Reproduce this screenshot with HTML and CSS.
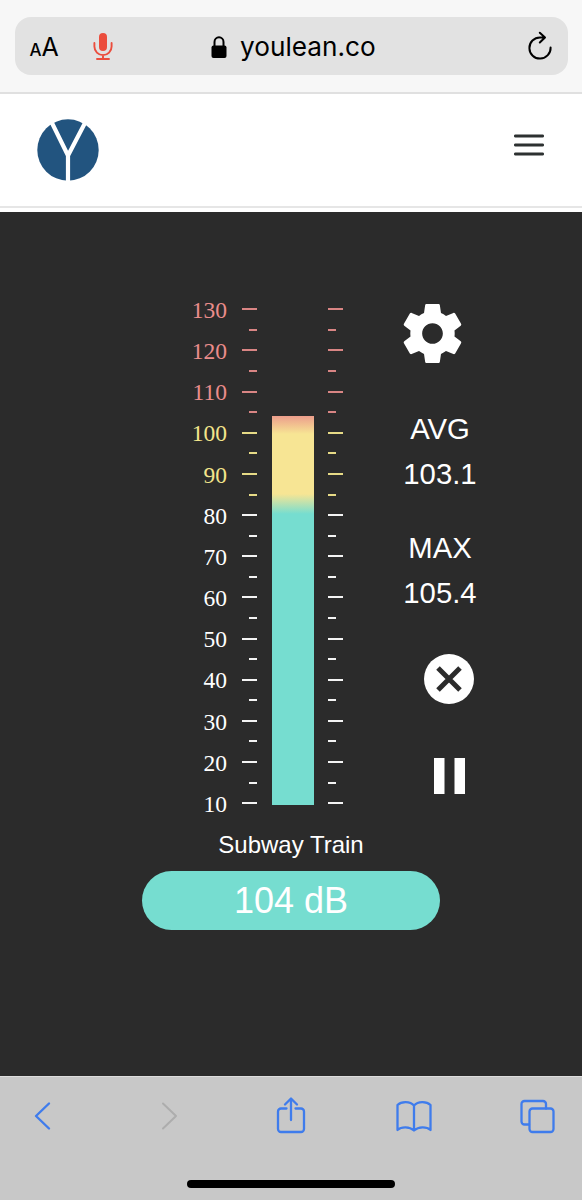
FILE: index.html
```html
<!DOCTYPE html>
<html lang="en">
<head>
  <meta charset="UTF-8">
  <meta name="viewport" content="width=device-width,initial-scale=1.0">
  <title>Youlean Online Loudness Meter</title>
  <link rel="stylesheet" href="styles.css">
</head>
<body>
  <header class="browser-bar">
    <div class="address">
      <span class="text-size"><small>A</small>A</span>
      <svg class="mic" width="20" height="30" viewBox="0 0 20 30">
        <rect x="6" y="1" width="8" height="18" rx="4" fill="#eb4d3d"/>
        <path d="M1.400 11v3.500a8.600 8.600 0 0 0 17.200 0V11M10 23v4M4 27h12" fill="none" stroke="#eb4d3d" stroke-width="1.900" stroke-linecap="round"/>
      </svg>
      <div class="site">
        <svg width="16" height="23" viewBox="0 0 16 23">
          <rect x="0.500" y="9.500" width="15" height="12.500" rx="2"/>
          <path d="M3.500 11V6a4.500 4.700 0 0 1 9 0v5" fill="none" stroke="#000" stroke-width="2"/>
        </svg>
        <span>youlean.co</span>
      </div>
      <svg class="reload" width="26" height="30" viewBox="0 0 26 30" fill="none" stroke="#000" stroke-width="2" stroke-linecap="round" stroke-linejoin="round">
        <path d="M23.600 16.500A10.600 10.600 0 1 1 13 6.400h4.500M12.800 1.700l5.200 4.800-5.200 5"/>
      </svg>
    </div>
  </header>

  <nav class="site-nav">
    <svg class="logo" width="62" height="62" viewBox="0 0 62 62">
      <circle cx="31" cy="31" r="30.700" fill="#22547f"/>
      <path d="M14.500 3L31 36.500 48.500 3M31 35v27" fill="none" stroke="#fff" stroke-width="4.200"/>
    </svg>
    <svg class="menu" width="30" height="22" viewBox="0 0 30 22" stroke="#2d3131" stroke-width="2.900" stroke-linecap="round">
      <path d="M1.400 2h27.200M1.400 11h27.200M1.400 20h27.200"/>
    </svg>
  </nav>

  <main class="app">
    <div class="meter">
      <ol class="labels">
        <li>130</li><li>120</li><li>110</li><li>100</li><li>90</li><li>80</li><li>70</li>
        <li>60</li><li>50</li><li>40</li><li>30</li><li>20</li><li>10</li>
      </ol>
      <div class="ticks ticks-left">
        <i></i><i></i><i></i><i></i><i></i><i></i><i></i><i></i><i></i><i></i><i></i><i></i><i></i>
        <i></i><i></i><i></i><i></i><i></i><i></i><i></i><i></i><i></i><i></i><i></i><i></i>
      </div>
      <div class="bar"></div>
      <div class="ticks">
        <i></i><i></i><i></i><i></i><i></i><i></i><i></i><i></i><i></i><i></i><i></i><i></i><i></i>
        <i></i><i></i><i></i><i></i><i></i><i></i><i></i><i></i><i></i><i></i><i></i><i></i>
      </div>
      <aside class="side">
        <svg class="gear" width="71" height="71" viewBox="0 0 24 24" fill="#fff">
          <path d="M19.430 12.980c.04-.32.07-.64.07-.98s-.03-.66-.07-.98l2.110-1.650c.19-.15.24-.42.12-.64l-2-3.460c-.12-.22-.39-.3-.61-.22l-2.490 1c-.52-.4-1.080-.73-1.690-.98l-.38-2.650C14.460 2.180 14.250 2 14 2h-4c-.25 0-.46.18-.49.42l-.38 2.650c-.61.25-1.170.59-1.690.98l-2.490-1c-.23-.09-.49 0-.61.22l-2 3.460c-.13.22-.07.49.12.64l2.110 1.650c-.04.32-.07.65-.07.98s.03.66.07.98l-2.110 1.650c-.19.15-.24.42-.12.64l2 3.460c.12.22.39.3.61.22l2.490-1c.52.4 1.080.73 1.690.98l.38 2.650c.03.24.24.42.49.42h4c.25 0 .46-.18.49-.42l.38-2.650c.61-.25 1.170-.59 1.690-.98l2.490 1c.23.09.49 0 .61-.22l2-3.460c.12-.22.07-.49-.12-.64l-2.110-1.650zM12 15.500c-1.930 0-3.500-1.570-3.500-3.500s1.570-3.500 3.500-3.500 3.500 1.570 3.500 3.500-1.570 3.500-3.500 3.500z"/>
        </svg>
        <p class="stat">AVG<br>103.1</p>
        <p class="stat">MAX<br>105.4</p>
        <svg class="reset" width="50" height="50" viewBox="0 0 50 50">
          <circle cx="25" cy="25" r="25" fill="#fff"/>
          <path d="M14 14l22 22M36 14l-22 22" stroke="#2b2b2b" stroke-width="5"/>
        </svg>
        <svg class="pause" width="31" height="36" viewBox="0 0 31 36" fill="#fff">
          <path d="M0 0h10.500v36H0zM20.500 0H31v36H20.500z"/>
        </svg>
      </aside>
    </div>
    <p class="source">Subway Train</p>
    <div class="level">104 dB</div>
  </main>

  <footer class="toolbar">
    <div class="actions">
      <svg viewBox="0 0 40 40"><path d="M24 7.500L11 20 24 32.500" stroke-width="2.400"/></svg>
      <svg class="off" viewBox="0 0 40 40"><path d="M15 7.500L28 20 15 32.500" stroke-width="2"/></svg>
      <svg viewBox="0 0 40 40">
        <path d="M15.500 12.500H10a3 3 0 0 0-3 3V33a3 3 0 0 0 3 3h20a3 3 0 0 0 3-3V15.500a3 3 0 0 0-3-3h-5.500M20 24V3M14 8.500L20 2.500l6 6"/>
      </svg>
      <svg viewBox="0 0 40 40">
        <path d="M20 9.500C16 5 7.500 5 3.500 9v25c4-3.500 12-3.500 16.500.5 4.500-4 12.500-4 16.500-.5V9c-4-4-12.500-4-16.500.5v25"/>
      </svg>
      <svg viewBox="0 0 40 40">
        <path d="M12 28.500H7.500a3 3 0 0 1-3-3V8a3 3 0 0 1 3-3H26a3 3 0 0 1 3 3v4.500"/>
        <rect x="12.500" y="12.500" width="24" height="23.500" rx="3"/>
      </svg>
    </div>
    <div class="home-line"></div>
  </footer>
</body>
</html>
```
FILE: styles.css
```css
*{margin:0;padding:0;box-sizing:border-box;}
body{width:582px;height:1200px;overflow:hidden;display:flex;flex-direction:column;background:#fff;font-family:"Liberation Sans",Arial,sans-serif;}
svg{display:block;flex:none;}

/* address bar */
.browser-bar{height:94px;padding:17px 14.5px 0;background:#f7f7f7;border-bottom:2px solid #e0e0e0;}
.address{height:58px;padding:0 15px;display:flex;align-items:center;background:#e2e2e2;border-radius:16px;font-family:Inter,sans-serif;color:#000;}
.text-size{width:63px;margin-top:4px;font-size:25px;line-height:30px;white-space:nowrap;}
.text-size small{font-size:17px;font-weight:500;}
.mic{margin-top:2px;}
.site{display:flex;align-items:center;gap:13px;margin:2px 0 0 98.500px;font-size:26.2px;line-height:32px;}
.reload{margin-left:auto;}

/* site header */
.site-nav{height:114px;padding:0 38px 0 36.5px;display:flex;justify-content:space-between;align-items:center;border-bottom:2px solid #e6e6e6;}
.menu{margin-top:-11px;}

/* meter */
.app{flex:1;margin-top:4px;padding-top:76px;background:#2b2b2b;color:#fff;}
.meter{display:flex;align-items:flex-start;padding-left:180px;}
.labels{list-style:none;width:47px;margin-right:15px;font-family:"Liberation Serif","Times New Roman",serif;font-size:23.500px;text-align:right;}
.labels li{height:41.17px;line-height:44.500px;}
.labels li:nth-child(-n+5){color:#f3e58b;}
.labels li:nth-child(-n+3){color:#ea8d8b;}
.ticks{width:15px;height:496px;margin-top:20.300px;display:flex;flex-direction:column;justify-content:space-between;align-items:flex-start;}
.ticks-left{align-items:flex-end;}
.ticks i{width:15px;height:2px;background:#f4f4f4;}
.ticks i:nth-child(even){width:8px;}
.ticks i:nth-child(-n+10){background:#e6da86;}
.ticks i:nth-child(-n+6){background:#d98584;}
.bar{width:42px;height:389px;margin:128px 14.5px 0;background:linear-gradient(#ec9e8c 0,#f7e594 18px,#f7e594 78px,#76ddd0 98px);}

.side{width:120px;margin-left:37px;display:flex;flex-direction:column;align-items:center;}
.gear{margin:9.5px 15px 0 0;}
.stat{height:90px;margin-top:37px;font-size:29.300px;line-height:45px;text-align:center;}
.stat + .stat{margin-top:29.500px;}
.reset{margin:39px 0 0 18px;}
.pause{margin:54px 0 0 18px;}

.source{margin-top:8px;font-size:24px;line-height:28px;text-align:center;}
.level{width:298px;height:58.500px;margin:12px auto 0;background:#76ddd0;border-radius:30px;font-size:36px;line-height:60px;text-align:center;}

/* bottom toolbar */
.toolbar{height:124px;padding:19px 25px 0;background:#c8c8c8;border-top:1px solid #dedede;}
.actions{display:flex;justify-content:space-between;}
.actions svg{width:40px;height:40px;fill:none;stroke:#3f7cec;stroke-width:2.300;stroke-linecap:round;stroke-linejoin:round;}
.actions .off{stroke:#adadad;}
.home-line{width:208px;height:8px;margin:44px auto 0;background:#000;border-radius:4px;}
```
